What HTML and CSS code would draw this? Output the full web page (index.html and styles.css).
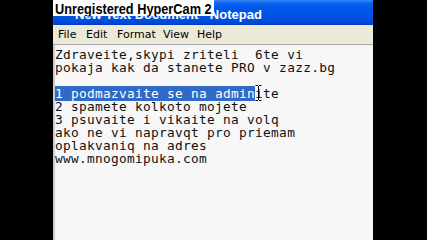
FILE: index.html
```html
<!DOCTYPE html>
<html>
<head>
<meta charset="utf-8">
<link rel="stylesheet" href="styles.css">
</head>
<body>
<div class="screen">
  <div class="window">
    <div class="titlebar"><span class="title">New Text Document - Notepad</span></div>
    <div class="menubar">
      <span class="menu m-file">File</span>
      <span class="menu m-edit">Edit</span>
      <span class="menu m-format">Format</span>
      <span class="menu m-view">View</span>
      <span class="menu m-help">Help</span>
    </div>
    <div class="editor">
      <div class="line">Zdraveite,skypi zriteli  6te vi</div>
      <div class="line">pokaja kak da stanete PRO v zazz.bg</div>
      <div class="line">&nbsp;</div>
      <div class="line"><span class="sel">1 podmazvaite se na admin</span><span class="caret-anchor"><svg class="caret" width="7" height="16" viewBox="0 0 7 16"><path d="M0.5 0.5h2.5M4 0.5h2.5M3.5 1v14M0.5 15.5h2.5M4 15.5h2.5" stroke="#000" stroke-width="1" fill="none"/></svg></span>ite</div>
      <div class="line">2 spamete kolkoto mojete</div>
      <div class="line">3 psuvaite i vikaite na volq</div>
      <div class="line">ako ne vi napravqt pro priemam</div>
      <div class="line">oplakvaniq na adres</div>
      <div class="line">www.mnogomipuka.com</div>
    </div>
    <div class="watermark"><span class="wm-text">Unregistered HyperCam 2</span></div>
  </div>
</div>
</body>
</html>
```
FILE: styles.css
```css
html, body {
  margin: 0;
  padding: 0;
  background: #000;
  width: 427px;
  height: 240px;
  overflow: hidden;
}
.screen {
  display: flex;
  padding-left: 53px;
  height: 240px;
}
.window {
  position: relative;
  width: 320px;
  height: 240px;
  display: flex;
  flex-direction: column;
  background: #f7f7f7;
}
.titlebar {
  height: 25px;
  box-sizing: border-box;
  background: linear-gradient(#3b87f5 0px, #0a62ee 3px, #0058ea 8px, #0052e2 18px, #0048d6 23px, #003cc4 25px);
  padding-left: 22px;
  padding-top: 5px;
}
.title {
  font-family: "Liberation Sans", Arial, sans-serif;
  font-weight: bold;
  font-size: 13px;
  color: #fff;
}
.menubar {
  height: 20px;
  box-sizing: border-box;
  background: #ece9d8;
  border-bottom: 1px solid #a6a9a8;
  font-family: "DejaVu Sans", sans-serif;
  font-size: 11px;
  color: #000;
  display: flex;
  align-items: center;
  padding-left: 5px;
}
.m-file { width: 28px; }
.m-edit { width: 31px; }
.m-format { width: 46px; }
.m-view { width: 34px; }
.m-help { width: 30px; }
.editor {
  flex: 1;
  border-left: 2px solid #c8ccd4;
  padding-top: 3px;
  font-family: "DejaVu Sans Mono", monospace;
  font-size: 12.8px;
  letter-spacing: 0.3px;
  color: #111;
}
.line {
  height: 13px;
  line-height: 13px;
  white-space: pre;
}
.sel {
  background: #3169c6;
  color: #fff;
}
.caret-anchor {
  position: relative;
  display: inline-block;
  width: 0;
  height: 13px;
  vertical-align: top;
}
.caret {
  position: absolute;
  left: 0;
  top: -2px;
  display: block;
}
.watermark {
  position: absolute;
  left: 0;
  top: 0;
  width: 161px;
  height: 16px;
  background: #fff;
  box-sizing: border-box;
  padding-left: 2px;
  white-space: nowrap;
  overflow: hidden;
}
.wm-text {
  display: inline-block;
  color: #000;
  font-family: "Liberation Sans", Arial, sans-serif;
  font-weight: bold;
  font-size: 15px;
  line-height: 16px;
  transform: scaleX(0.85);
  transform-origin: left center;
}
```
